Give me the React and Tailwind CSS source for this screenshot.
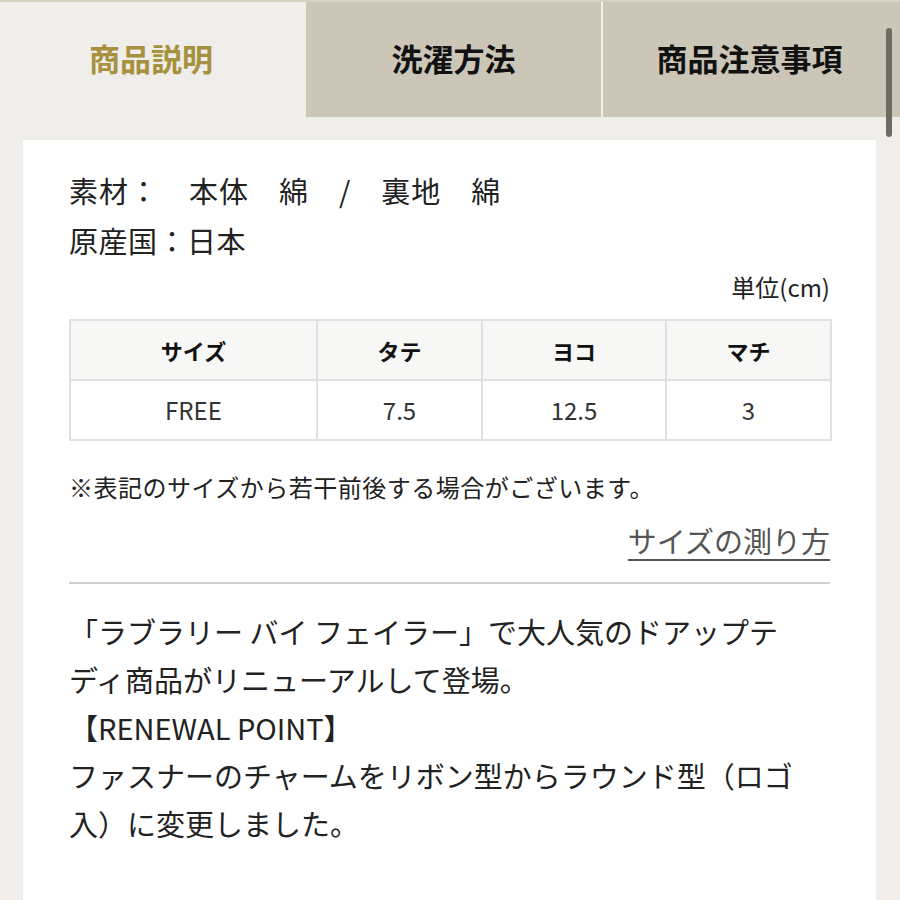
import React from "react";

const font = { fontFamily: '"Noto Sans CJK JP", "Noto Sans", sans-serif' };

export default function App() {
  return (
    <div
      className="relative w-[900px] h-[900px] overflow-hidden bg-[#efeeea] text-[#222]"
      style={font}
    >
      <div className="h-[2px] bg-[#d8d2c4]" />
      <div className="flex h-[115px]">
        <div className="w-[306px] flex items-center justify-center bg-[#efeeea] text-[#a8913e] text-[31px] font-bold pb-[2px] pr-[4px]">
          商品説明
        </div>
        <div className="w-[295px] flex items-center justify-center bg-[#cbc6b7] text-[#111] text-[31px] font-bold pb-[2px]">
          洗濯方法
        </div>
        <div className="w-[2px] bg-[#f4f1ea]" />
        <div className="flex-1 flex items-center justify-center bg-[#cbc6b7] text-[#111] text-[31px] font-bold pb-[2px] pr-[4px]">
          商品注意事項
        </div>
      </div>
      <div className="absolute left-[886px] top-[28px] w-[6px] h-[109px] rounded-full bg-[#6f6b62]" />

      <div className="pt-[23px] pl-[23px] pr-[24px]">
        <div className="bg-white h-[800px] pl-[46px] pr-[46px] pt-[25px]">
          <div className="text-[29px] leading-[50px] whitespace-pre tracking-[1px]">
            {"素材：　本体　綿　/　裏地　綿"}
          </div>
          <div className="text-[29px] leading-[50px] tracking-[0.5px]">原産国：日本</div>
          <div className="mt-[7px] text-right text-[24px] leading-[30px]">
            単位(cm)
          </div>
          <table className="mt-[17px] w-[761px] border-collapse table-fixed">
            <colgroup>
              <col className="w-[247px]" />
              <col className="w-[165px]" />
              <col className="w-[184px]" />
              <col className="w-[165px]" />
            </colgroup>
            <thead>
              <tr className="bg-[#f7f7f5] h-[60px]">
                {["サイズ", "タテ", "ヨコ", "マチ"].map((t) => (
                  <th
                    key={t}
                    className="border-2 border-[#e0e0e0] text-[22px] font-bold text-[#111] text-center"
                  >
                    {t}
                  </th>
                ))}
              </tr>
            </thead>
            <tbody>
              <tr className="h-[60px]">
                {["FREE", "7.5", "12.5", "3"].map((t) => (
                  <td
                    key={t}
                    className="border-2 border-[#e0e0e0] text-[24px] text-[#333] text-center"
                  >
                    {t}
                  </td>
                ))}
              </tr>
            </tbody>
          </table>
          <div className="mt-[30px] text-[24px] leading-[32px] tracking-[0.5px]">
            ※表記のサイズから若干前後する場合がございます。
          </div>
          <div className="mt-[19px] text-right text-[29px] leading-[36px]">
            <span className="text-[#555] underline decoration-[2px] underline-offset-[6px]">
              サイズの測り方
            </span>
          </div>
          <div className="mt-[24px] h-[2px] bg-[#d0d0d0]" />
          <div className="mt-[23px] text-[29px] leading-[48px] whitespace-nowrap">
            <div>「ラブラリー バイ フェイラー」で大人気のドアップテ</div>
            <div>ディ商品がリニューアルして登場。</div>
            <div>【RENEWAL POINT】</div>
            <div>ファスナーのチャームをリボン型からラウンド型（ロゴ</div>
            <div>入）に変更しました。</div>
          </div>
        </div>
      </div>
    </div>
  );
}
